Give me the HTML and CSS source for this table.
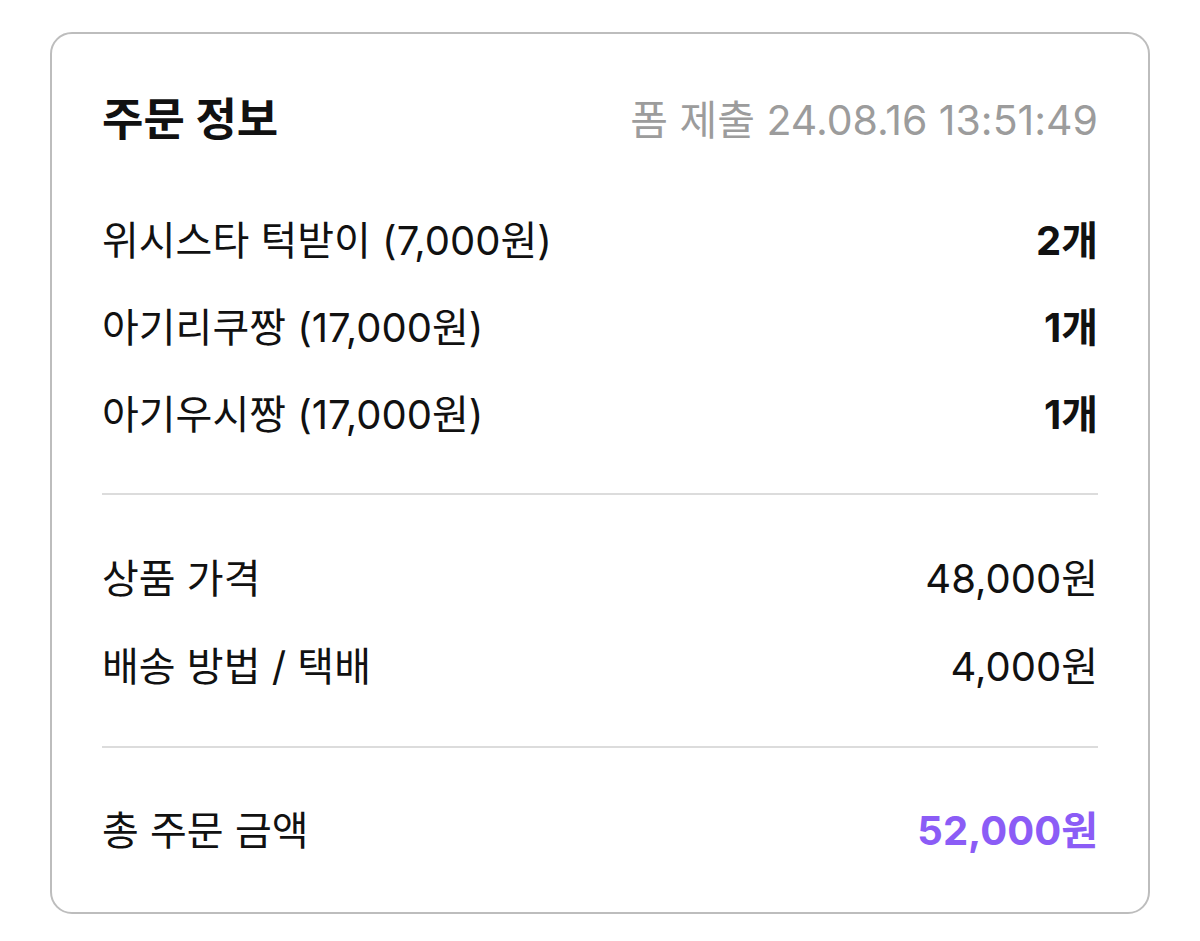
FILE: index.html
```html
<!DOCTYPE html>
<html lang="ko">
<head>
<meta charset="utf-8">
<title>주문 정보</title>
<link rel="stylesheet" href="styles.css">
</head>
<body>
<div class="card">
  <div class="header">
    <h1 class="title">주문 정보</h1>
    <span class="date">폼 제출 24.08.16 13:51:49</span>
  </div>
  <div class="items">
    <div class="row item"><span>위시스타 턱받이 (7,000원)</span><span class="qty">2개</span></div>
    <div class="row item"><span>아기리쿠짱 (17,000원)</span><span class="qty">1개</span></div>
    <div class="row item"><span>아기우시짱 (17,000원)</span><span class="qty">1개</span></div>
  </div>
  <hr class="divider">
  <div class="section">
    <div class="row"><span>상품 가격</span><span>48,000원</span></div>
    <div class="row"><span>배송 방법 / 택배</span><span>4,000원</span></div>
  </div>
  <hr class="divider">
  <div class="section last">
    <div class="row"><span>총 주문 금액</span><span class="total">52,000원</span></div>
  </div>
</div>
</body>
</html>
```

FILE: styles.css
```css
html, body {
  margin: 0;
  padding: 0;
  background: #ffffff;
}
body {
  padding: 32px 50px;
  font-family: "Inter", "Noto Sans CJK KR", sans-serif;
  color: #111111;
}
.card {
  width: 1100px;
  height: 882px;
  box-sizing: border-box;
  border: 2px solid #bdbdbd;
  border-radius: 22px;
  padding: 0 50px;
}
.header {
  display: flex;
  justify-content: space-between;
  align-items: center;
  padding-top: 58px;
  height: 56px;
}
.title {
  margin: 0;
  font-size: 45px;
  font-weight: 700;
  line-height: 56px;
}
.date {
  font-size: 41px;
  color: #9c9c9c;
  line-height: 56px;
}
.items {
  padding: 46px 0 38px;
}
.row {
  display: flex;
  justify-content: space-between;
  align-items: center;
  height: 88px;
  font-size: 40px;
}
.item {
  height: 87px;
}
.qty {
  font-weight: 700;
}
.divider {
  margin: 0;
  border: 0;
  height: 2px;
  background: #dcdcdc;
}
.section {
  padding: 37px 0 38px;
}
.section.last {
  padding: 36px 0 0;
}
.total {
  color: #8b5cf6;
  font-weight: 700;
}
```
